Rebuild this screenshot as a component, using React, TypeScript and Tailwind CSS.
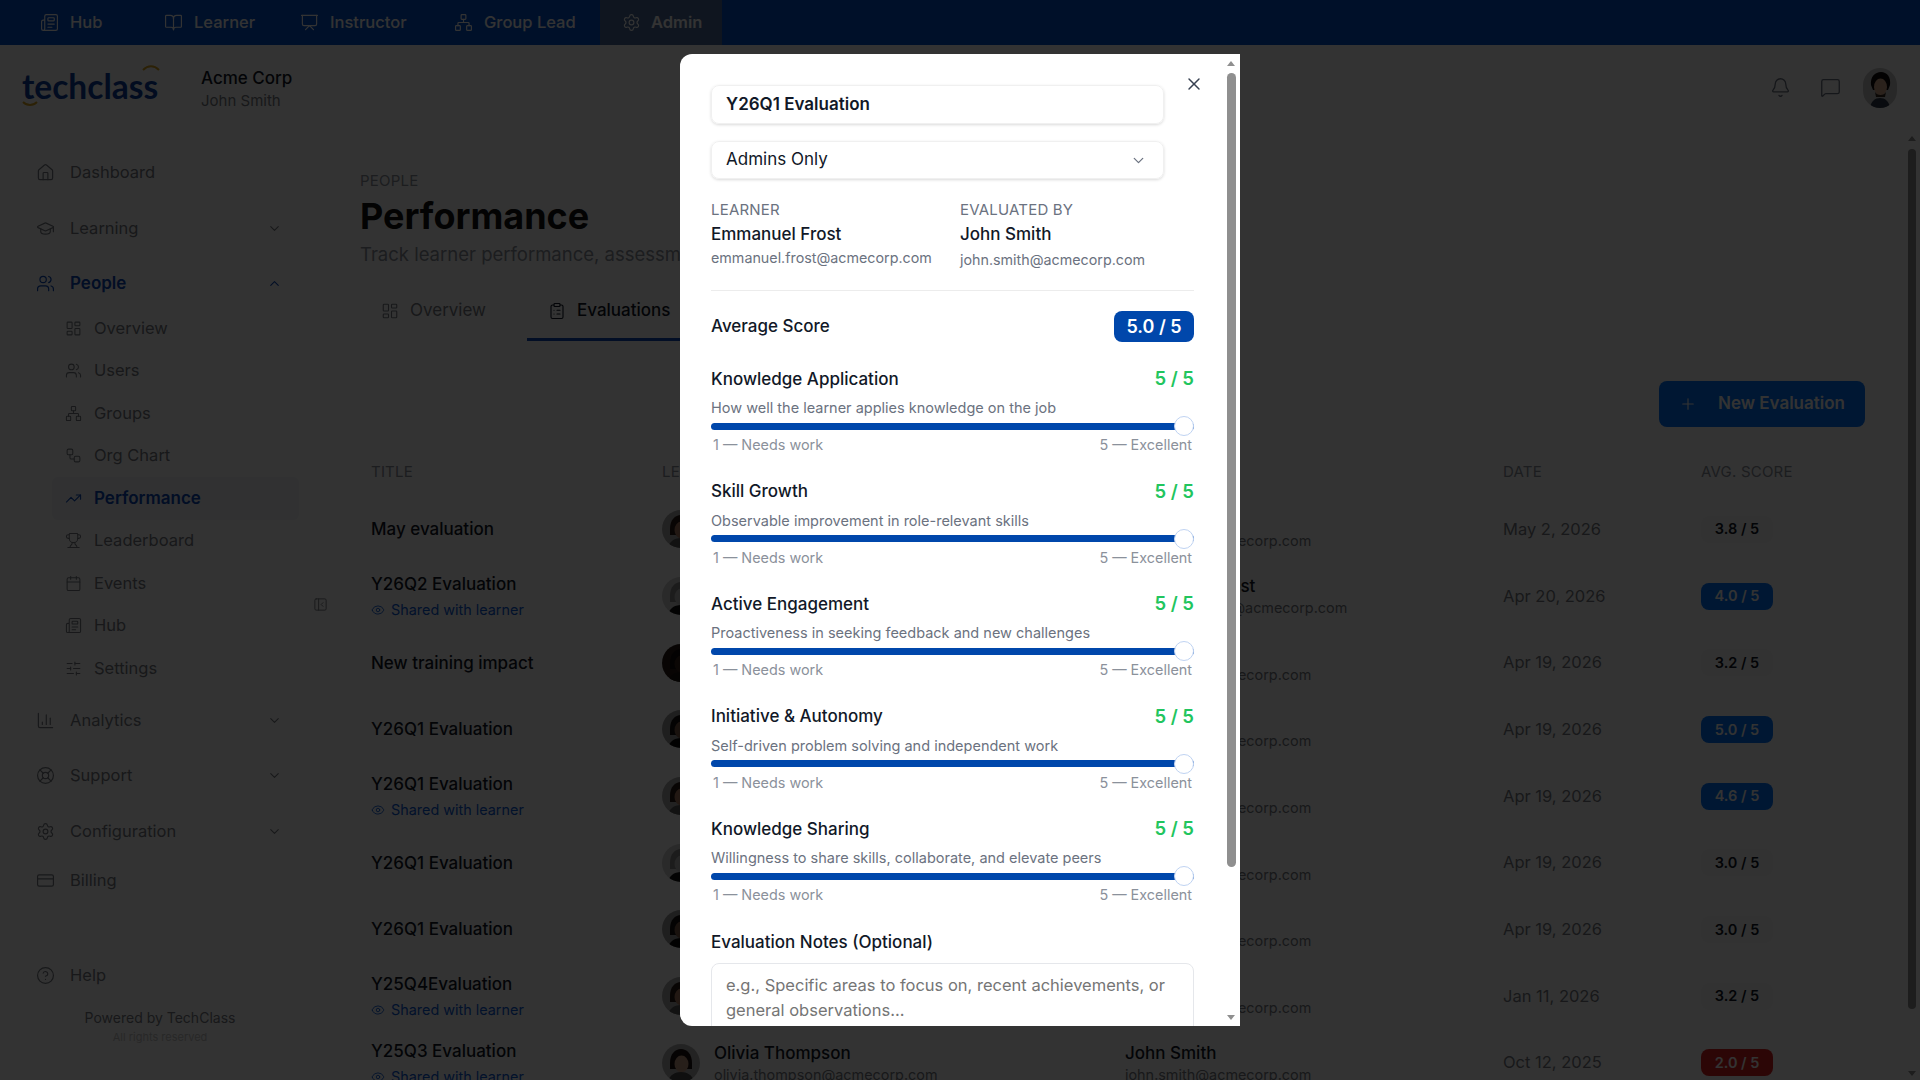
import {
  Bell,
  BookOpen,
  Calendar,
  ChartColumn,
  ChevronDown,
  ChevronUp,
  CircleHelp,
  ClipboardList,
  CreditCard,
  Eye,
  GraduationCap,
  House,
  LayoutDashboard,
  LifeBuoy,
  MessageSquare,
  Network,
  Newspaper,
  PanelLeftClose,
  Plus,
  Presentation,
  Settings,
  SlidersHorizontal,
  TrendingUp,
  Trophy,
  Users,
  Workflow,
  X,
} from "lucide-react";

const topTabs = [
  { label: "Hub", icon: Newspaper, className: "w-[142px] pl-[40px]" },
  { label: "Learner", icon: BookOpen, className: "w-[136px] pl-[22px]" },
  { label: "Instructor", icon: Presentation, className: "w-[154px] pl-[22px]" },
  { label: "Group Lead", icon: Network, className: "w-[168px] pl-[22px]" },
];

const subItems = [
  { label: "Overview", icon: LayoutDashboard },
  { label: "Users", icon: Users },
  { label: "Groups", icon: Network },
  { label: "Org Chart", icon: Workflow },
  { label: "Performance", icon: TrendingUp, active: true },
  { label: "Leaderboard", icon: Trophy },
  { label: "Events", icon: Calendar },
  { label: "Hub", icon: Newspaper },
  { label: "Settings", icon: SlidersHorizontal },
];

const rows = [
  { title: "May evaluation", date: "May 2, 2026", score: "3.8 / 5", tone: "plain", avatar: 0 },
  { title: "Y26Q2 Evaluation", shared: true, date: "Apr 20, 2026", score: "4.0 / 5", tone: "blue", avatar: 1, evaluator: "Emmanuel Frost", evalEmail: "emmanuel.frost@acmecorp.com" },
  { title: "New training impact", date: "Apr 19, 2026", score: "3.2 / 5", tone: "plain", avatar: 2 },
  { title: "Y26Q1 Evaluation", date: "Apr 19, 2026", score: "5.0 / 5", tone: "blue", avatar: 3 },
  { title: "Y26Q1 Evaluation", shared: true, date: "Apr 19, 2026", score: "4.6 / 5", tone: "blue", avatar: 0 },
  { title: "Y26Q1 Evaluation", date: "Apr 19, 2026", score: "3.0 / 5", tone: "plain", avatar: 1 },
  { title: "Y26Q1 Evaluation", date: "Apr 19, 2026", score: "3.0 / 5", tone: "plain", avatar: 3 },
  { title: "Y25Q4Evaluation", shared: true, date: "Jan 11, 2026", score: "3.2 / 5", tone: "plain", avatar: 0 },
  { title: "Y25Q3 Evaluation", shared: true, date: "Oct 12, 2025", score: "2.0 / 5", tone: "red", avatar: 4, learner: "Olivia Thompson", learnerEmail: "olivia.thompson@acmecorp.com" },
];

const criteria = [
  { title: "Knowledge Application", text: "How well the learner applies knowledge on the job" },
  { title: "Skill Growth", text: "Observable improvement in role-relevant skills" },
  { title: "Active Engagement", text: "Proactiveness in seeking feedback and new challenges" },
  { title: "Initiative & Autonomy", text: "Self-driven problem solving and independent work" },
  { title: "Knowledge Sharing", text: "Willingness to share skills, collaborate, and elevate peers" },
];

const avatarColors = [
  { bg: "#a8a8a8", hair: "#2a1a14", skin: "#a9795f", body: "#5a5a5a" },
  { bg: "#cfcfcf", hair: "#8c8c8c", skin: "#bdbdbd", body: "#111111" },
  { bg: "#2a1c16", hair: "#120c0a", skin: "#3a241c", body: "#1c1410" },
  { bg: "#9a9a9a", hair: "#17110f", skin: "#7d5a48", body: "#0e0e0e" },
  { bg: "#b0b0b0", hair: "#1d1210", skin: "#c49a82", body: "#4a4a4a" },
];

function Avatar({ variant, className }: { variant: number; className: string }) {
  const c = avatarColors[variant];
  return (
    <svg viewBox="0 0 38 38" className={`shrink-0 rounded-full ${className}`}>
      <rect width="38" height="38" fill={c.bg} />
      <path d="M8 19c0-9 5-14 11-14s11 5 11 14v6H8z" fill={c.hair} />
      <ellipse cx="19.5" cy="20" rx="7" ry="8.5" fill={c.skin} />
      <path d="M6 38c1-6 6-10 13-10s12 4 13 10z" fill={c.body} />
    </svg>
  );
}

function UserPhoto() {
  return (
    <svg viewBox="0 0 34 40" className="ml-[22px] h-[40px] w-[34px] shrink-0 rounded-full">
      <rect width="34" height="40" fill="#c8c8c8" />
      <path d="M8 17c-1-8 4-13 10-13s10 5 9 13l-2 5H10z" fill="#120c0a" />
      <ellipse cx="17.5" cy="19" rx="6.5" ry="8.5" fill="#d8ab8e" />
      <path d="M12 24c2 4 9 4 11 0l-1 5h-9z" fill="#3a2a22" />
      <path d="M7 40c1-7 5-10 10-10s9 3 10 10z" fill="#2f3a4a" />
    </svg>
  );
}

function NavRow({
  icon: Icon,
  label,
  chevron,
  active,
  className = "",
}: {
  icon: typeof House;
  label: string;
  chevron?: "up" | "down";
  active?: boolean;
  className?: string;
}) {
  return (
    <div
      className={`flex h-[55.5px] items-center pl-[36px] pr-[78px] ${
        active ? "font-semibold text-[#0a48b8]" : "text-[#777b82]"
      } ${className}`}
    >
      <Icon size={19} strokeWidth={1.5} className="shrink-0" />
      <span className={`ml-[15px] flex-1 ${active ? "text-[17px]" : "text-[16.5px]"}`}>{label}</span>
      {chevron === "down" && <ChevronDown size={15} strokeWidth={1.75} />}
      {chevron === "up" && <ChevronUp size={15} strokeWidth={1.75} />}
    </div>
  );
}

function ScoreBadge({ score, tone }: { score: string; tone: string }) {
  const toneClass =
    tone === "blue"
      ? "bg-[#0074ff] text-[#ffffff]"
      : tone === "red"
        ? "bg-[#dd2222] text-[#ffffff]"
        : "bg-[#fafafa] text-[#111827]";
  return (
    <span
      className={`flex h-[27px] w-[72px] items-center justify-center rounded-[8px] text-[14.5px] font-semibold ${toneClass}`}
    >
      {score}
    </span>
  );
}

function Criterion({ title, text }: { title: string; text: string }) {
  return (
    <div>
      <div className="flex h-[24px] items-center justify-between text-[17px] font-medium text-[#111827]">
        <span className="mt-[1px]">{title}</span>
        <span className="text-[18.5px] font-semibold text-[#22c55e]">5 / 5</span>
      </div>
      <p className="mt-[7px] h-[20px] text-[14.5px] leading-[20px] text-[#6b7280]">{text}</p>
      <div className="relative mt-[4.5px] h-[7px] rounded-full bg-[#0047ab]">
        <span className="absolute right-0 top-[-6.5px] h-[20px] w-[20px] rounded-full border border-[#bfd3f2] bg-white" />
      </div>
      <div className="mt-[5.5px] flex h-[20px] justify-between px-[2px] text-[14.4px] leading-[20px] text-[#8b919b]">
        <span>1 — Needs work</span>
        <span>5 — Excellent</span>
      </div>
    </div>
  );
}

export default function App() {
  return (
    <div className="relative h-[1080px] w-[1920px] overflow-hidden bg-white font-['Inter',sans-serif]">
      {/* top bar */}
      <div className="flex h-[45px] items-center bg-[#0050cc] text-[16.5px] font-medium text-white">
        {topTabs.map(({ label, icon: Icon, className }) => (
          <div key={label} className={`flex h-full items-center gap-[11px] ${className}`}>
            <Icon size={19} strokeWidth={1.5} />
            <span>{label}</span>
          </div>
        ))}
        <div className="flex h-full w-[122px] items-center gap-[10px] bg-[#4a6a9a] pl-[22px] font-semibold">
          <Settings size={19} strokeWidth={1.5} />
          <span>Admin</span>
        </div>
      </div>

      {/* header */}
      <div className="flex h-[85px] items-center pl-[22px] pr-[23px]">
        <div className="relative w-[179px]">
          <span className="font-['Lato',sans-serif] text-[33.5px] font-bold leading-none text-[#0a3f9e]">
            techclass
          </span>
          <svg viewBox="0 0 18 6" className="absolute left-[120px] top-[-5px] h-[6px] w-[18px]">
            <path d="M1 5c5-5 11-5 16 0" fill="none" stroke="#d9a520" strokeWidth="2" />
          </svg>
          <svg viewBox="0 0 16 5" className="absolute left-0 top-[31px] h-[5px] w-[16px]">
            <path d="M1 1c4 4 10 4 14 0" fill="none" stroke="#d9a520" strokeWidth="2" />
          </svg>
        </div>
        <div className="flex-1 pt-[1px]">
          <div className="text-[17px] font-medium leading-[24px] text-[#111827]">Acme Corp</div>
          <div className="text-[15px] leading-[21px] text-[#777b82]">John Smith</div>
        </div>
        <Bell size={21} strokeWidth={1.5} className="text-[#6b7280]" />
        <MessageSquare size={21} strokeWidth={1.5} className="ml-[29px] text-[#6b7280]" />
        <UserPhoto />
      </div>

      <div className="flex h-[950px]">
        {/* sidebar */}
        <aside className="relative flex w-[360px] shrink-0 flex-col pt-[15px]">
          <NavRow icon={House} label="Dashboard" />
          <NavRow icon={GraduationCap} label="Learning" chevron="down" />
          <NavRow icon={Users} label="People" chevron="up" active />
          <div className="mt-[-4.5px]">
            {subItems.map(({ label, icon: Icon, active }) => (
              <div
                key={label}
                className={`ml-[52px] flex h-[42.5px] w-[247px] items-center rounded-[6px] pl-[13px] ${
                  active ? "bg-[#f2f5fa] font-semibold text-[#0a48b8]" : "text-[#777b82]"
                }`}
              >
                <Icon size={17} strokeWidth={1.5} className="shrink-0" />
                <span className={`ml-[12px] ${active ? "text-[17px]" : "text-[16.5px]"}`}>{label}</span>
              </div>
            ))}
          </div>
          <NavRow icon={ChartColumn} label="Analytics" chevron="down" className="mt-[3px]" />
          <NavRow icon={LifeBuoy} label="Support" chevron="down" />
          <NavRow icon={Settings} label="Configuration" chevron="down" />
          <NavRow icon={CreditCard} label="Billing" className="mt-[-6px]" />
          <NavRow icon={CircleHelp} label="Help" className="mt-[39px]" />
          <div className="ml-[83px] mt-[5px] w-[154px] text-center text-[14px] leading-[20px] text-[#777b82]">
            Powered by TechClass
          </div>
          <div className="ml-[83px] mt-[1px] w-[154px] text-center text-[11px] leading-[16px] text-[#c4c4c4]">
            All rights reserved
          </div>
          <PanelLeftClose size={15} strokeWidth={1.5} className="absolute left-[313px] top-[467px] text-[#777b82]" />
        </aside>

        {/* main */}
        <main className="flex-1 pt-[41px]">
          <div className="text-[15px] uppercase leading-[20px] tracking-[0.2px] text-[#8b919b]">People</div>
          <h1 className="mt-[3px] text-[36px] font-bold leading-[44px] text-[#111111]">Performance</h1>
          <p className="mt-[3px] text-[18.5px] leading-[26px] text-[#8b919b]">
            Track learner performance, assessments
          </p>
          <div className="mt-[20px] flex h-[54px] items-start">
            <div className="flex h-[54px] w-[167px] items-center gap-[11px] border-b-[3px] border-transparent pb-[4px] pl-[21px] text-[17px] text-[#777b82]">
              <LayoutDashboard size={18} strokeWidth={1.5} />
              <span>Overview</span>
            </div>
            <div className="flex h-[54px] w-[220px] items-center gap-[11px] border-b-[3px] border-[#0a48b8] pb-[4px] pl-[21px] text-[17px] font-medium text-[#111827]">
              <ClipboardList size={18} strokeWidth={1.5} />
              <span>Evaluations</span>
            </div>
          </div>
          <div className="mt-[40px] flex justify-end pr-[55px]">
            <div className="flex h-[46px] w-[206px] items-center gap-[21px] rounded-[8px] bg-[#0072ff] pl-[20px] text-[17px] font-semibold text-white">
              <Plus size={18} strokeWidth={1.5} />
              <span>New Evaluation</span>
            </div>
          </div>

          <div className="mt-[32px] pl-[11px]">
            <div className="grid h-[26px] grid-cols-[291px_463px_378px_198px_1fr] items-center text-[15px] uppercase tracking-[0.2px] text-[#8b919b]">
              <span>Title</span>
              <span>Learner</span>
              <span>Evaluated by</span>
              <span>Date</span>
              <span>Avg. Score</span>
            </div>
            <div className="mt-[11px]">
              {rows.map((row, i) => (
                <div
                  key={i}
                  className="grid h-[66.7px] grid-cols-[291px_463px_378px_198px_1fr] items-center"
                >
                  <div>
                    <div className="text-[17px] font-medium leading-[24px] text-[#111827]">{row.title}</div>
                    {row.shared && (
                      <div className="mt-[4px] flex items-center gap-[6px] text-[14.4px] leading-[20px] text-[#0a5ad8]">
                        <Eye size={14} strokeWidth={1.5} />
                        <span>Shared with learner</span>
                      </div>
                    )}
                  </div>
                  <div className="flex items-center gap-[14px]">
                    <Avatar variant={row.avatar} className="h-[38px] w-[38px]" />
                    {row.learner && (
                      <div>
                        <div className="text-[17px] font-medium leading-[24px] text-[#111827]">{row.learner}</div>
                        <div className="text-[14.4px] leading-[20px] text-[#777b82]">{row.learnerEmail}</div>
                      </div>
                    )}
                  </div>
                  <div>
                    <div className="text-[17px] font-medium leading-[24px] text-[#111827]">
                      {row.evaluator ?? "John Smith"}
                    </div>
                    <div className="text-[14.4px] leading-[20px] text-[#777b82]">
                      {row.evalEmail ?? "john.smith@acmecorp.com"}
                    </div>
                  </div>
                  <span className="text-[16.5px] text-[#777b82]">{row.date}</span>
                  <ScoreBadge score={row.score} tone={row.tone} />
                </div>
              ))}
            </div>
          </div>
        </main>
      </div>

      {/* page scrollbar */}
      <div className="absolute left-[1908px] top-[149px] h-[860px] w-[8px] rounded-full bg-[#8f8f8f]" />
      <div className="absolute left-[1908px] top-[136px] h-0 w-0 border-x-[4px] border-b-[5px] border-x-transparent border-b-[#8f8f8f]" />
      <div className="absolute left-[1908px] top-[1071px] h-0 w-0 border-x-[4px] border-t-[5px] border-x-transparent border-t-[#8f8f8f]" />

      {/* modal */}
      <div className="absolute inset-0 z-10 bg-black/80">
        <div className="absolute left-[680px] top-[54px] h-[972px] w-[560px] overflow-hidden rounded-l-[12px] bg-white">
          <div className="w-[544px] pl-[31px] pr-[30px] pt-[31px]">
            <div className="flex h-[39px] w-[453px] items-center rounded-[8px] border border-[#f0f0f0] pl-[14px] text-[17px] font-semibold text-[#111827] shadow-[0_1px_3px_rgba(0,0,0,0.15)]">
              Y26Q1 Evaluation
            </div>
            <div className="mt-[17px] flex h-[38px] w-[453px] items-center justify-between rounded-[8px] border border-[#f0f0f0] pl-[14px] pr-[16px] text-[17px] text-[#111827] shadow-[0_1px_3px_rgba(0,0,0,0.15)]">
              <span>Admins Only</span>
              <ChevronDown size={17} strokeWidth={1.75} className="text-[#6b7280]" />
            </div>
            <div className="mt-[21px] grid grid-cols-[249px_1fr]">
              <div>
                <div className="text-[15px] uppercase leading-[20px] tracking-[0.2px] text-[#6b7280]">Learner</div>
                <div className="mt-[2px] text-[17px] font-medium leading-[24px] text-[#111827]">Emmanuel Frost</div>
                <div className="text-[14.3px] leading-[24px] text-[#6b7280]">emmanuel.frost@acmecorp.com</div>
              </div>
              <div>
                <div className="text-[15px] uppercase leading-[20px] tracking-[0.2px] text-[#6b7280]">Evaluated by</div>
                <div className="mt-[2px] text-[17px] font-medium leading-[24px] text-[#111827]">John Smith</div>
                <div className="mt-[2px] text-[14.3px] leading-[24px] text-[#6b7280]">john.smith@acmecorp.com</div>
              </div>
            </div>
            <div className="mt-[18px] h-px bg-[#ececec]" />
            <div className="mt-[20px] flex items-center justify-between text-[17px] font-medium text-[#111827]">
              <span>Average Score</span>
              <span className="flex h-[31px] w-[80px] items-center justify-center rounded-[8px] bg-[#0047ab] text-[18px] font-semibold text-white">
                5.0 / 5
              </span>
            </div>
            <div className="mt-[25px] flex flex-col gap-[24.5px]">
              {criteria.map((c) => (
                <Criterion key={c.title} title={c.title} text={c.text} />
              ))}
            </div>
            <div className="mt-[24.5px] text-[17px] font-medium leading-[24px] text-[#111827]">
              Evaluation Notes (Optional)
            </div>
            <div className="mt-[9px] h-[120px] rounded-[8px] border border-[#e5e7eb] px-[14px] pt-[9px] text-[16.5px] leading-[25px] text-[#757575]">
              e.g., Specific areas to focus on, recent achievements, or general observations...
            </div>
          </div>
          <X size={20} strokeWidth={1.75} className="absolute left-[504px] top-[20px] text-[#374151]" />
          {/* modal scrollbar */}
          <div className="absolute left-[547px] top-[19px] h-[794px] w-[9px] rounded-full bg-[#8f8f8f]" />
          <div className="absolute left-[547px] top-[7px] h-0 w-0 border-x-[4.5px] border-b-[5px] border-x-transparent border-b-[#8f8f8f]" />
          <div className="absolute left-[547px] top-[961px] h-0 w-0 border-x-[4.5px] border-t-[5px] border-x-transparent border-t-[#8f8f8f]" />
        </div>
      </div>
    </div>
  );
}
